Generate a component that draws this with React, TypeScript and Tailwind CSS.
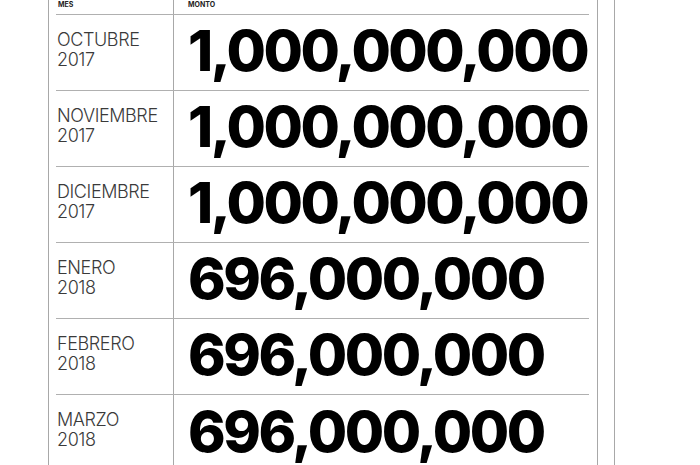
import React from "react";

const rows = [
  { m: "OCTUBRE", y: "2017", v: "1,000,000,000" },
  { m: "NOVIEMBRE", y: "2017", v: "1,000,000,000" },
  { m: "DICIEMBRE", y: "2017", v: "1,000,000,000" },
  { m: "ENERO", y: "2018", v: "696,000,000" },
  { m: "FEBRERO", y: "2018", v: "696,000,000" },
  { m: "MARZO", y: "2018", v: "696,000,000" },
];

export default function App() {
  return (
    <div className="flex h-[465px] w-[700px] overflow-hidden bg-white" style={{ fontFamily: "Inter, 'Liberation Sans', sans-serif" }}>
      <div className="w-[48px] shrink-0" />
      <div className="w-[550px] shrink-0 border-x border-[#a8a8a8] pl-[7px] pr-[8px]">
        <div className="flex h-[15px] border-b border-[#b0b0b0]">
          <div className="w-[118px] shrink-0 border-r border-[#a8a8a8] pl-[2px] text-[7px] font-bold leading-[9px] text-[#222]">MES</div>
          <div className="pl-[14px] text-[7px] font-bold leading-[9px] text-[#222]">MONTO</div>
        </div>
        {rows.map((r, i) => (
          <div key={i} className={"flex h-[76px] " + (i < rows.length - 1 ? "border-b border-[#b0b0b0]" : "")}>
            <div className="w-[118px] shrink-0 border-r border-[#a8a8a8] pl-[1px] pt-[15px] text-[18px] font-light leading-[20px] tracking-[-0.4px] text-[#3a3a3a]">
              <div>{r.m}</div>
              <div>{r.y}</div>
            </div>
            <div className="flex items-center pb-[4px] pl-[14px] text-[57px] font-extrabold leading-none tracking-[-2.5px] text-black">
              {r.v}
            </div>
          </div>
        ))}
      </div>
      <div className="w-[16px] shrink-0" />
      <div className="border-l border-[#a8a8a8]" />
    </div>
  );
}
